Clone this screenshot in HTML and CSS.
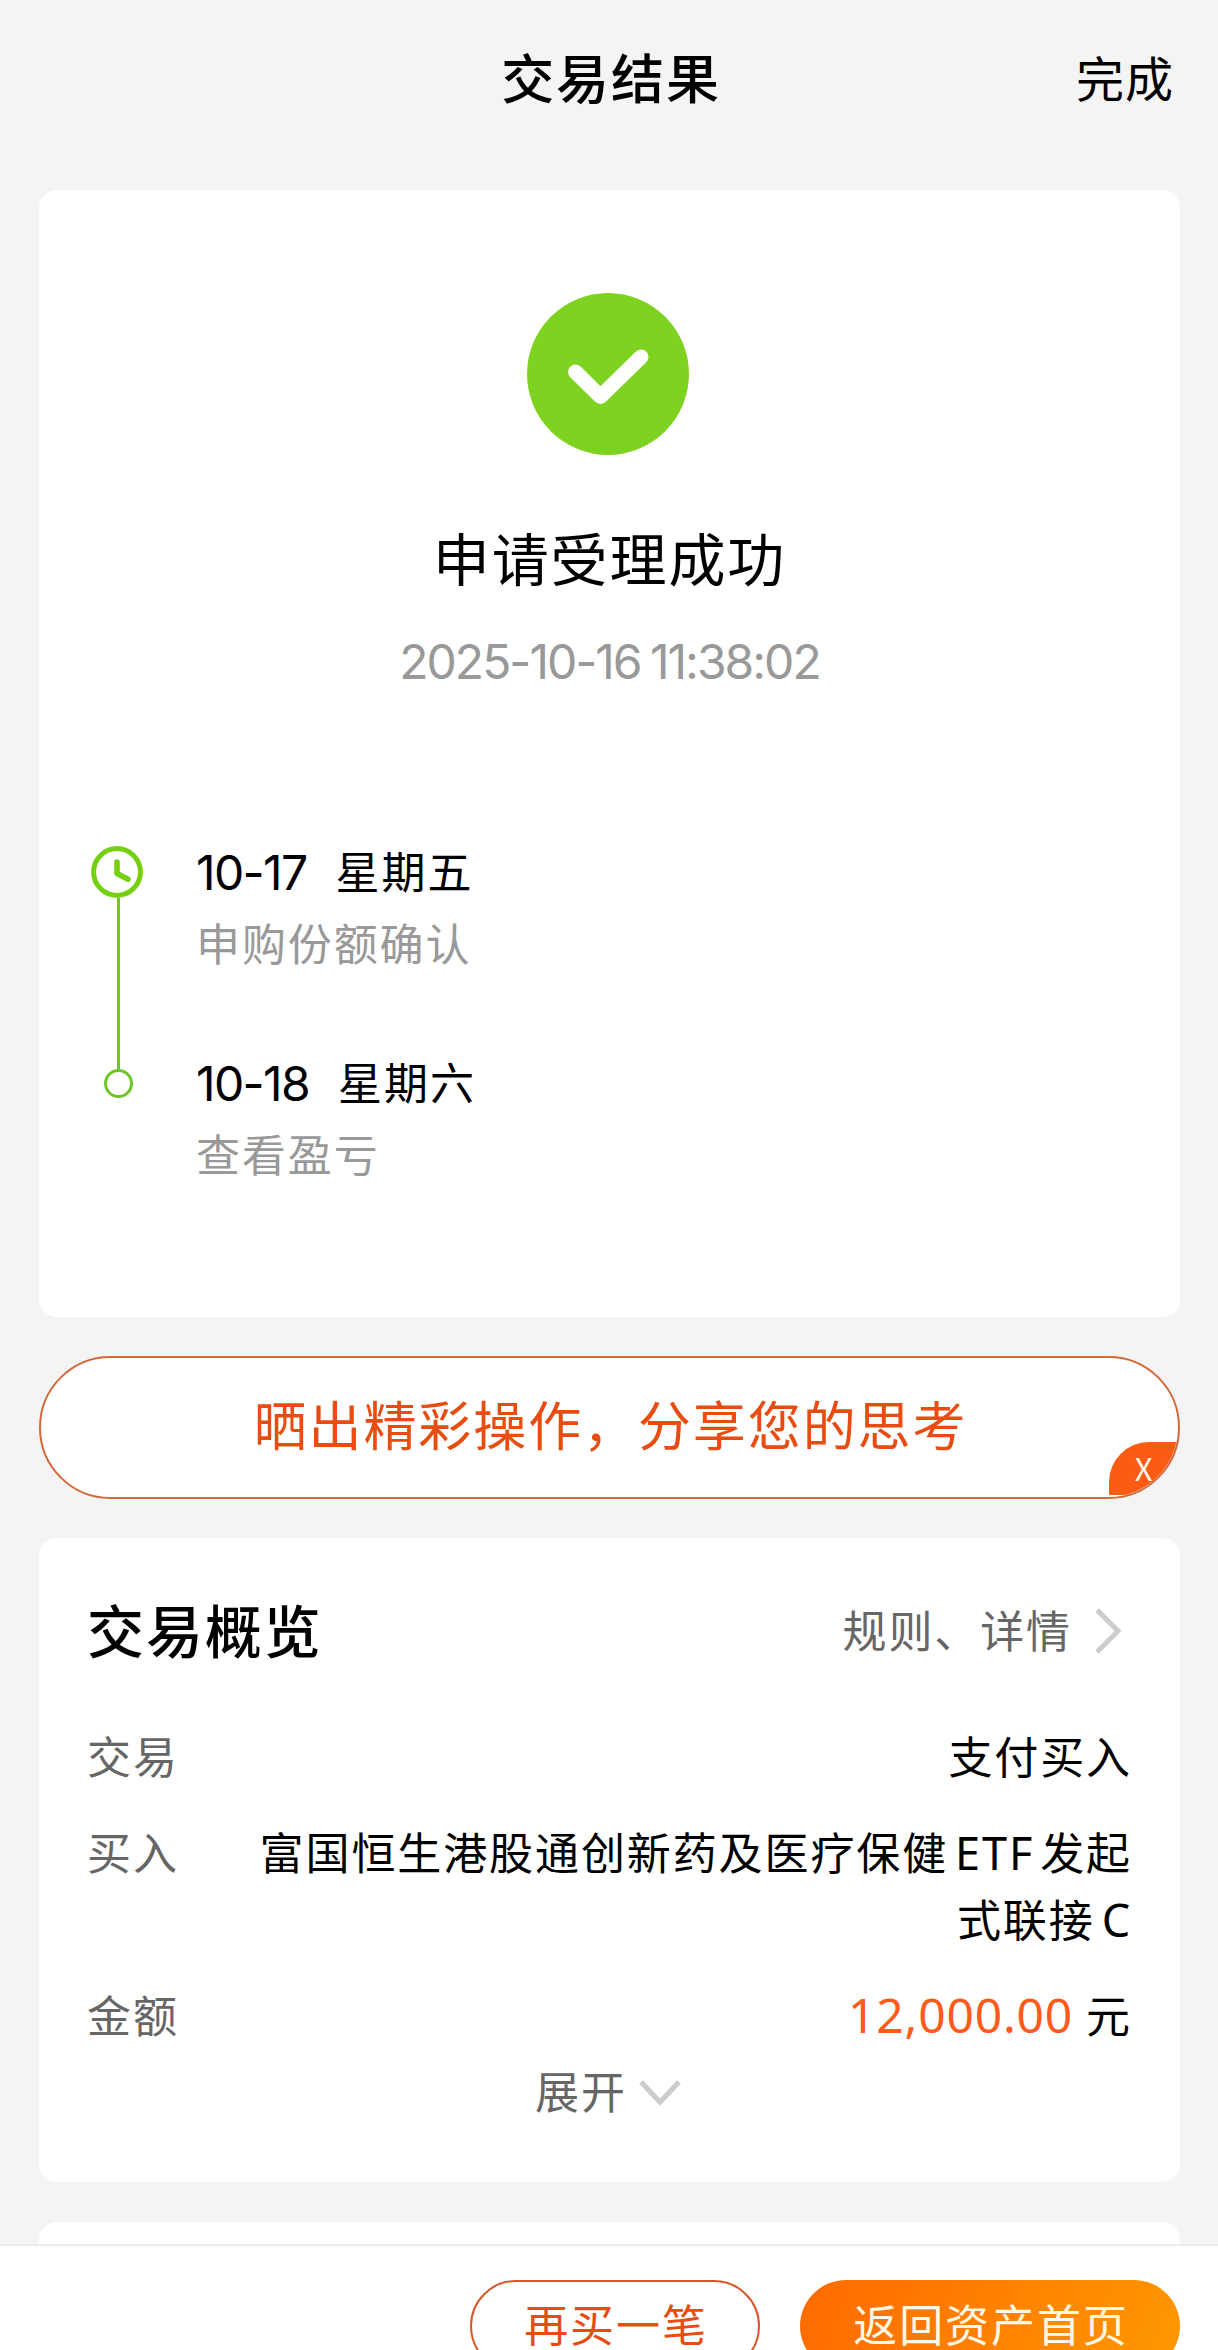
FILE: index.html
```html
<!DOCTYPE html>
<html lang="zh-CN">
<head>
  <meta charset="UTF-8">
  <title>交易结果</title>
  <link rel="stylesheet" href="styles.css">
</head>
<body>
  <header class="header">
    <h1>交易结果</h1>
    <a class="done">完成</a>
  </header>

  <main class="content">
    <section class="card result">
      <svg class="success-icon" width="162" height="162" viewBox="0 0 162 162">
        <circle cx="81" cy="81" r="81" fill="#7ed321"/>
        <path d="M48.5 79 L73.5 103.5 L114 64" fill="none" stroke="#fff" stroke-width="15" stroke-linecap="round" stroke-linejoin="round"/>
      </svg>
      <h2>申请受理成功</h2>
      <p class="time">2025-10-16 11:38:02</p>

      <div class="timeline">
        <div class="rail">
          <svg class="clock" width="52" height="52" viewBox="0 0 52 52" fill="none" stroke="#76d012">
            <circle cx="26" cy="26" r="23.4" stroke-width="5"/>
            <path d="M26 16 V27.5 L37 33.3" stroke-width="5.6" stroke-linecap="round" stroke-linejoin="round"/>
          </svg>
          <div class="line"></div>
          <div class="dot"></div>
        </div>
        <div class="steps">
          <div class="step">
            <p class="date"><span class="num">10-17</span><span>星期五</span></p>
            <p class="desc">申购份额确认</p>
          </div>
          <div class="step">
            <p class="date"><span class="num">10-18</span><span>星期六</span></p>
            <p class="desc">查看盈亏</p>
          </div>
        </div>
      </div>
    </section>

    <div class="share">
      <span>晒出精彩操作，分享您的思考</span>
      <button class="close">X</button>
    </div>

    <section class="card overview">
      <div class="overview-head">
        <h2>交易概览</h2>
        <a class="rules">规则、详情
          <svg width="28" height="46" viewBox="0 0 28 46" fill="none" stroke="#ccc" stroke-width="5">
            <path d="M3 2 L24 23 L3 44"/>
          </svg>
        </a>
      </div>
      <div class="row">
        <span class="label">交易</span>
        <span class="value">支付买入</span>
      </div>
      <div class="row">
        <span class="label">买入</span>
        <span class="value">富国恒生港股通创新药及医疗保健<span class="latin">ETF</span>发起<br>式联接<span class="latin last">C</span></span>
      </div>
      <div class="row">
        <span class="label">金额</span>
        <span class="value"><span class="amount">12,000.00</span><span class="unit">元</span></span>
      </div>
      <a class="expand">展开
        <svg width="42" height="26" viewBox="0 0 42 26" fill="none" stroke="#ccc" stroke-width="5">
          <path d="M2 2 L21 22 L40 2"/>
        </svg>
      </a>
    </section>

    <section class="card more"></section>
  </main>

  <footer class="footer">
    <button class="btn btn-again">再买一笔</button>
    <button class="btn btn-home">返回资产首页</button>
  </footer>
</body>
</html>
```

FILE: styles.css
```css
* {
  box-sizing: border-box;
}
body {
  margin: 0;
  height: 2350px;
  display: flex;
  flex-direction: column;
  overflow: hidden;
  background: #f4f4f4;
  color: #000;
  font-family: "Noto Sans CJK SC", sans-serif;
  font-size: 44px;
  line-height: 56px;
  letter-spacing: 1.9px;
}
h1, h2, p {
  margin: 0;
  font-weight: 500;
}
p {
  font-weight: 400;
}
button {
  border: none;
  padding: 0;
  font-family: inherit;
  letter-spacing: inherit;
}
svg {
  display: block;
}

/* header */
.header {
  height: 190px;
  padding: 0 44px 38px;
  display: grid;
  grid-template-columns: 1fr auto 1fr;
  align-items: center;
}
.header h1 {
  grid-column: 2;
  padding-left: 4px;
  font-size: 53px;
  line-height: 80px;
}
.done {
  justify-self: end;
  font-size: 48px;
  letter-spacing: 1px;
}

.content {
  flex: 1;
  min-height: 0;
  overflow: hidden;
  padding: 0 38px 0 39px;
}
.card {
  background: #fff;
  border-radius: 18px;
}

/* result */
.result {
  height: 1127px;
  padding: 103px 52px 0;
}
.success-icon {
  margin: 0 auto;
  padding-right: 3px;
  width: 165px;
}
.result h2 {
  margin-top: 61px;
  font-size: 57px;
  line-height: 80px;
  font-weight: 400;
  text-align: center;
}
.time {
  margin-top: 36px;
  font-family: Inter, sans-serif;
  font-size: 48px;
  line-height: 60px;
  letter-spacing: -2px;
  word-spacing: -2px;
  color: #999;
  text-align: center;
}
.timeline {
  margin-top: 150px;
  display: flex;
  gap: 50px;
}
.rail {
  width: 55px;
  padding-top: 4px;
  display: flex;
  flex-direction: column;
  align-items: center;
}
.clock {
  align-self: flex-start;
}
.line {
  width: 3px;
  height: 171px;
  background: #70c526;
}
.dot {
  width: 29px;
  height: 29px;
  border: 3px solid #70c526;
  border-radius: 50%;
}
.step {
  margin-bottom: 83px;
}
.date {
  display: flex;
  gap: 29px;
}
.num {
  padding-top: 3px;
  margin-bottom: -3px;
  font-family: Inter, sans-serif;
  font-size: 48px;
  letter-spacing: -1.6px;
}
.desc {
  margin-top: 16px;
  color: #999;
}

/* share banner */
.share {
  position: relative;
  height: 143px;
  margin: 39px 0;
  padding: 0 0 9px 2px;
  display: flex;
  align-items: center;
  justify-content: center;
  overflow: hidden;
  background: #fff;
  border: 2px solid #d5693a;
  border-radius: 72px;
  color: #e84c10;
  font-size: 53px;
}
.close {
  position: absolute;
  right: 0;
  bottom: 2px;
  width: 69px;
  height: 53px;
  padding: 0 0 2px 2px;
  background: #fb5b12;
  border-radius: 40px 0 0 0;
  color: #fff6e8;
  font-size: 31px;
  line-height: 50px;
}

/* overview */
.overview {
  height: 644px;
  padding: 50px 48px 0;
}
.overview-head {
  display: flex;
  align-items: center;
  justify-content: space-between;
  height: 80px;
  margin-bottom: 54px;
}
.overview-head h2 {
  font-size: 57px;
}
.rules {
  display: flex;
  align-items: center;
  gap: 22px;
  padding: 2px 10px 0 0;
  color: #666;
}
.rules svg {
  margin-top: 4px;
}
.row {
  display: flex;
  justify-content: space-between;
  margin-bottom: 29px;
  line-height: 67px;
}
.label {
  color: #666;
}
.value {
  text-align: right;
}
.latin {
  margin: 0 6px 0 7px;
  font-family: "Noto Sans", sans-serif;
  font-size: 45px;
  line-height: 1;
}
.latin.last {
  margin-right: 0;
}
.amount {
  font-family: "Noto Sans", sans-serif;
  font-size: 48px;
  line-height: 1;
  letter-spacing: 0.8px;
  color: #fc5b1a;
}
.unit {
  margin-left: 13px;
}
.expand {
  display: flex;
  align-items: center;
  justify-content: center;
  gap: 12px;
  margin-top: -15px;
  padding-right: 3px;
  color: #666;
}
.expand svg {
  margin-top: 6px;
}
.more {
  height: 200px;
  margin-top: 40px;
}

/* bottom bar */
.footer {
  height: 106px;
  padding: 34px 38px 0 0;
  display: flex;
  justify-content: flex-end;
  gap: 40px;
  background: #fff;
  border-top: 2px solid #ebebeb;
}
.btn {
  height: 92px;
  padding: 0 0 6px 2px;
  border-radius: 46px;
  font-size: 44px;
}
.btn-again {
  width: 290px;
  background: #fff;
  border: 2px solid #d5592a;
  color: #e84c10;
}
.btn-home {
  width: 380px;
  background: linear-gradient(110deg, #ff6a00, #ff9800);
  color: #fff8e6;
}
```
